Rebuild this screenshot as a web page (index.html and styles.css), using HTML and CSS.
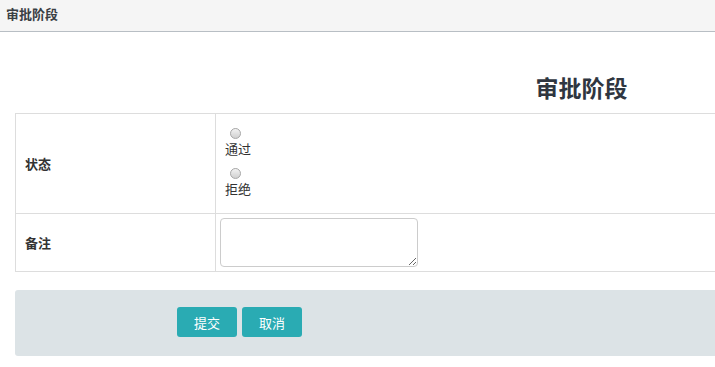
FILE: index.html
```html
<!DOCTYPE html>
<html>
<head>
  <meta charset="UTF-8">
  <title>审批阶段</title>
  <link rel="stylesheet" href="styles.css">
</head>
<body>
  <div class="topbar">审批阶段</div>

  <div class="page">
    <h2 class="page-title">审批阶段</h2>

    <table class="form-table">
      <tr class="row-status">
        <td class="label">状态</td>
        <td class="value">
          <div class="option">
            <input type="radio" name="status" id="pass">
            <label for="pass">通过</label>
          </div>
          <div class="option">
            <input type="radio" name="status" id="reject">
            <label for="reject">拒绝</label>
          </div>
        </td>
      </tr>
      <tr class="row-remark">
        <td class="label">备注</td>
        <td class="value value-remark">
          <textarea class="remark"></textarea>
        </td>
      </tr>
    </table>

    <div class="actions">
      <button class="btn">提交</button>
      <button class="btn">取消</button>
    </div>
  </div>
</body>
</html>
```

FILE: styles.css
```css
/* Global styles */
* {
  margin: 0;
  padding: 0;
  box-sizing: border-box;
}

body {
  font-family: "Liberation Sans", "Noto Sans CJK SC", sans-serif;
  font-size: 13px;
  color: #333;
  background: #fff;
  overflow: hidden;
}

/* Top bar */
.topbar {
  height: 32px;
  line-height: 30px;
  padding-left: 6px;
  background-color: #f5f5f5;
  border-bottom: 1px solid #b8bec4;
  font-weight: bold;
  color: #3a3f44;
}

/* Page content */
.page {
  width: 1163px;
  padding: 0 15px;
}

.page-title {
  text-align: center;
  font-size: 23px;
  font-weight: bold;
  color: #2f3640;
  height: 81px;
  line-height: 30px;
  padding-top: 42px;
}

/* Form table */
.form-table {
  width: 100%;
  border-collapse: collapse;
}

.form-table td {
  border: 1px solid #dddddd;
}

.label {
  width: 200px;
  padding-left: 9px;
  font-weight: bold;
  vertical-align: middle;
}

.value {
  vertical-align: top;
  padding: 14px 9px 0;
}

.row-status {
  height: 100px;
}

.row-remark {
  height: 58px;
}

.option {
  height: 40px;
}

.option input[type="radio"] {
  appearance: none;
  display: block;
  width: 11px;
  height: 11px;
  margin-left: 5px;
  border: 1px solid #a8a8a8;
  border-radius: 50%;
  background: linear-gradient(#f2f2f2, #d0d0d0);
}

.option label {
  display: block;
  line-height: 22px;
}

.value-remark {
  padding: 4px;
  vertical-align: middle;
}

.remark {
  display: block;
  width: 198px;
  height: 49px;
  border: 1px solid #cccccc;
  border-radius: 4px;
  resize: both;
}

/* Footer actions */
.actions {
  display: flex;
  gap: 5px;
  margin-top: 18px;
  height: 66px;
  padding: 17px 0 0 162px;
  background-color: #dce3e6;
  border-radius: 3px;
}

.btn {
  width: 60px;
  height: 30px;
  border: none;
  border-radius: 3px;
  background-color: #2aabb3;
  color: #fff;
  font-family: "Liberation Sans", "Noto Sans CJK SC", sans-serif;
  font-size: 13px;
}
```
